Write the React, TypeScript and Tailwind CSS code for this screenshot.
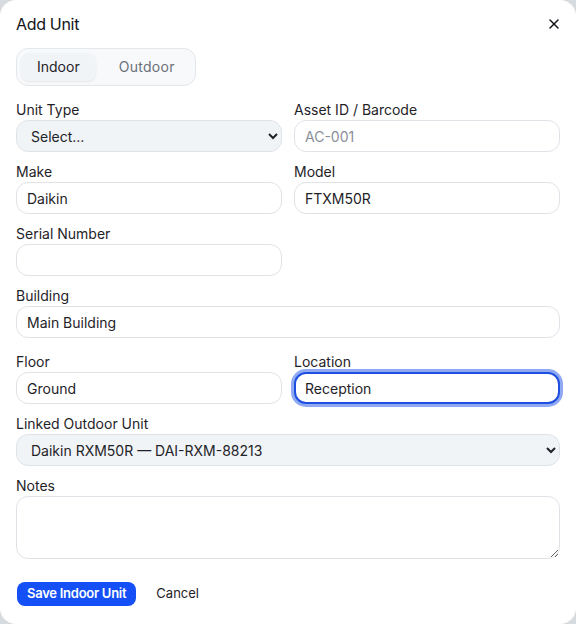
import { X } from "lucide-react";

const font = { fontFamily: "Inter, 'Noto Sans', sans-serif" };

const inputCls =
  "h-8 w-full rounded-xl border border-[#dfe3e8] bg-white px-[10px] text-sm text-[#1f2328] outline-none placeholder:text-[#8a8f98]";
const selectCls =
  "h-8 w-full rounded-xl border border-[#dfe3e8] bg-[#f1f4f7] px-[10px] text-sm text-[#1f2328] outline-none";

const Field = ({ label, children, className = "" }: { label: string; children: React.ReactNode; className?: string }) => (
  <div className={className}>
    <label className="block h-5 text-sm leading-5 text-[#1f2328]">{label}</label>
    {children}
  </div>
);

export default function App() {
  return (
    <div className="min-h-screen bg-[#d7dadf]" style={font}>
      <div className="h-[624px] w-[576px] rounded-2xl bg-white px-4 pt-[14px]">
        {/* Header */}
        <div className="flex h-5 items-center justify-between">
          <h2 className="text-base leading-5 tracking-[-0.02em] text-[#111418]">Add Unit</h2>
          <button className="-mr-[2px] text-[#111418]">
            <X className="h-4 w-4" strokeWidth={2.2} />
          </button>
        </div>

        {/* Indoor / Outdoor tabs */}
        <div className="mt-[14px] inline-flex h-[38px] items-center gap-[6px] rounded-xl border border-[#e3e6ea] bg-[#f8f9fa] p-1">
          <button className="h-[28px] rounded-lg bg-[#f1f4f7] px-4 text-sm text-[#1f2328] shadow-[0_1px_2px_rgba(0,0,0,0.08)]">
            Indoor
          </button>
          <button className="h-[28px] rounded-lg pl-[17px] pr-4 text-sm tracking-[0.02em] text-[#6b7079]">Outdoor</button>
        </div>

        {/* Form */}
        <div className="mt-[14px] grid grid-cols-2 gap-x-[12px] gap-y-[10px]">
          <Field label="Unit Type">
            <select className={selectCls} defaultValue="">
              <option value="">Select...</option>
              <option>Wall Mounted</option>
              <option>Cassette</option>
            </select>
          </Field>
          <Field label="Asset ID / Barcode">
            <input className={inputCls} placeholder="AC-001" />
          </Field>
          <Field label="Make">
            <input className={inputCls} defaultValue="Daikin" />
          </Field>
          <Field label="Model">
            <input className={inputCls} defaultValue="FTXM50R" />
          </Field>
          <Field label="Serial Number">
            <input className={inputCls} />
          </Field>
          <div />
          <Field label="Building" className="col-span-2">
            <input className={inputCls} defaultValue="Main Building" />
          </Field>
          <Field label="Floor" className="mt-1">
            <input className={inputCls} defaultValue="Ground" />
          </Field>
          <Field label="Location" className="mt-1">
            <input
              className="h-8 w-full rounded-xl border-2 border-[#1e4fe0] bg-white px-[9px] text-sm text-[#1f2328] outline-none ring-[3px] ring-[#8fa9f3]"
              defaultValue="Reception"
            />
          </Field>
          <Field label="Linked Outdoor Unit" className="col-span-2">
            <select className={selectCls} defaultValue="rxm">
              <option value="rxm">Daikin RXM50R — DAI-RXM-88213</option>
            </select>
          </Field>
          <Field label="Notes" className="col-span-2">
            <textarea className="block h-[63px] w-full rounded-xl border border-[#dfe3e8] bg-white px-[10px] py-2 text-sm outline-none" />
          </Field>
        </div>

        {/* Actions */}
        <div className="mt-[23px] flex items-center gap-5">
          <button className="ml-[1px] h-6 rounded-lg bg-[#1450f5] px-[10px] text-[13px] font-semibold tracking-[-0.02em] text-white">
            Save Indoor Unit
          </button>
          <button className="text-[13px] text-[#1f2328]">Cancel</button>
        </div>
      </div>
    </div>
  );
}
